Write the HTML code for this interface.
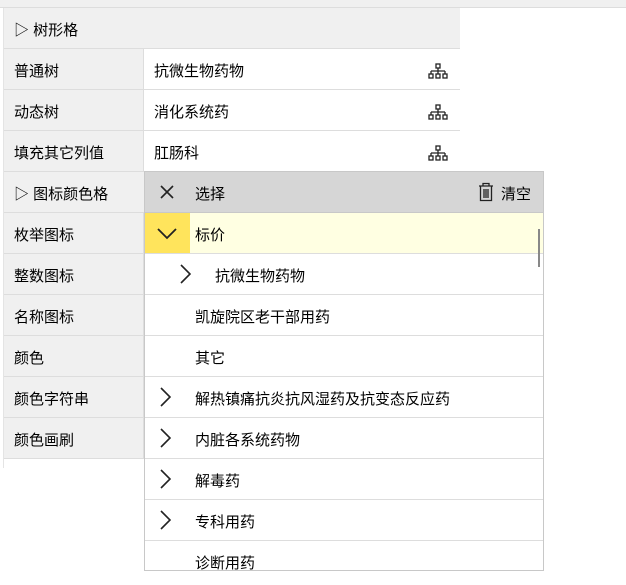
<!DOCTYPE html>
<html><head><meta charset="utf-8"><style>
*{margin:0;padding:0;box-sizing:border-box}
body{width:626px;height:585px;background:#fff;font-family:"Liberation Sans","Noto Sans CJK SC",sans-serif;font-size:15px;color:#000;position:relative;overflow:hidden}
.a{position:absolute}
.top{left:0;top:0;width:626px;height:8px;background:#f0f0f0;border-bottom:1px solid #ddd}
.grid{left:4px;top:8px;width:456px}
.row{height:41px;border-bottom:1px solid #ddd;display:flex;position:relative}
.lab{width:140px;background:#f0f0f0;border-right:1px solid #ddd;padding-left:10px;line-height:46px}
.val{flex:1;background:#fff;padding-left:10px;line-height:46px}
.hdr{background:#f0f0f0;padding-left:10px;line-height:46px}
.ico{position:absolute;right:12px;top:14px}
.pop{left:144px;top:171px;width:400px;height:400px;border:1px solid #c8c8c8;background:#fff;overflow:hidden}
.pr{height:41px;border-bottom:1px solid #ddd;position:relative;line-height:45px}
.pr .t{position:absolute;left:50px}
.chev{position:absolute;left:14px;top:12px}
</style></head><body>
<div class="a top"></div>
<div class="a" style="left:3px;top:8px;width:1px;height:460px;background:#e4e4e4"></div>
<div class="a grid">
<div class="row hdr">▷ 树形格</div>
<div class="row"><div class="lab">普通树</div><div class="val">抗微生物药物</div><svg class="ico" width="20" height="16" viewBox="0 0 20 16" fill="none" stroke="#222" stroke-width="1.3"><rect x="8" y="1" width="4" height="4"/><path d="M10 5v3M3 8h14M3 8v3M10 8v3M17 8v3"/><rect x="1" y="11" width="4" height="4"/><rect x="8" y="11" width="4" height="4"/><rect x="15" y="11" width="4" height="4"/></svg></div>
<div class="row"><div class="lab">动态树</div><div class="val">消化系统药</div><svg class="ico" width="20" height="16" viewBox="0 0 20 16" fill="none" stroke="#222" stroke-width="1.3"><rect x="8" y="1" width="4" height="4"/><path d="M10 5v3M3 8h14M3 8v3M10 8v3M17 8v3"/><rect x="1" y="11" width="4" height="4"/><rect x="8" y="11" width="4" height="4"/><rect x="15" y="11" width="4" height="4"/></svg></div>
<div class="row"><div class="lab">填充其它列值</div><div class="val">肛肠科</div><svg class="ico" width="20" height="16" viewBox="0 0 20 16" fill="none" stroke="#222" stroke-width="1.3"><rect x="8" y="1" width="4" height="4"/><path d="M10 5v3M3 8h14M3 8v3M10 8v3M17 8v3"/><rect x="1" y="11" width="4" height="4"/><rect x="8" y="11" width="4" height="4"/><rect x="15" y="11" width="4" height="4"/></svg></div>
<div class="row hdr">▷ 图标颜色格</div>
<div class="row"><div class="lab">枚举图标</div><div class="val"></div></div>
<div class="row"><div class="lab">整数图标</div><div class="val"></div></div>
<div class="row"><div class="lab">名称图标</div><div class="val"></div></div>
<div class="row"><div class="lab">颜色</div><div class="val"></div></div>
<div class="row"><div class="lab">颜色字符串</div><div class="val"></div></div>
<div class="row"><div class="lab">颜色画刷</div><div class="val"></div></div>
</div>
<div class="a pop">
<div class="pr" style="background:#d6d6d6;border-bottom-color:#c8c8c8"><svg class="chev" width="16" height="16" viewBox="0 0 16 16" stroke="#222" stroke-width="1.6"><path d="M2 2l12 12M14 2L2 14"/></svg><span class="t">选择</span>
<svg style="position:absolute;left:333px;top:10px" width="16" height="20" viewBox="0 0 16 20" fill="none" stroke="#222" stroke-width="1.3"><path d="M1 4h14M5 4V1.5h6V4M2.5 4v14.5h11V4M6 7v9M8 7v9M10 7v9"/></svg><span style="position:absolute;left:356px">清空</span></div>
<div class="pr" style="background:#ffffe2"><div style="position:absolute;left:0;top:0;width:45px;height:40px;background:#ffe45c"></div><svg class="chev" width="20" height="14" viewBox="0 0 20 14" stroke="#222" stroke-width="1.8" fill="none" style="left:12px;top:14px"><path d="M1 2l9 9 9-9"/></svg><span class="t">标价</span><div style="position:absolute;left:393px;top:16px;width:2px;height:38px;background:#888"></div></div>
<div class="pr"><svg class="chev" width="12" height="20" viewBox="0 0 12 20" stroke="#222" stroke-width="1.6" fill="none" style="left:34px;top:10px"><path d="M2 1l9 9-9 9"/></svg><span class="t" style="left:70px">抗微生物药物</span></div>
<div class="pr"><span class="t">凯旋院区老干部用药</span></div>
<div class="pr"><span class="t">其它</span></div>
<div class="pr"><svg class="chev" width="12" height="20" viewBox="0 0 12 20" stroke="#222" stroke-width="1.6" fill="none" style="top:10px"><path d="M2 1l9 9-9 9"/></svg><span class="t">解热镇痛抗炎抗风湿药及抗变态反应药</span></div>
<div class="pr"><svg class="chev" width="12" height="20" viewBox="0 0 12 20" stroke="#222" stroke-width="1.6" fill="none" style="top:10px"><path d="M2 1l9 9-9 9"/></svg><span class="t">内脏各系统药物</span></div>
<div class="pr"><svg class="chev" width="12" height="20" viewBox="0 0 12 20" stroke="#222" stroke-width="1.6" fill="none" style="top:10px"><path d="M2 1l9 9-9 9"/></svg><span class="t">解毒药</span></div>
<div class="pr"><svg class="chev" width="12" height="20" viewBox="0 0 12 20" stroke="#222" stroke-width="1.6" fill="none" style="top:10px"><path d="M2 1l9 9-9 9"/></svg><span class="t">专科用药</span></div>
<div class="pr"><span class="t">诊断用药</span></div>
</div>
</body></html>
